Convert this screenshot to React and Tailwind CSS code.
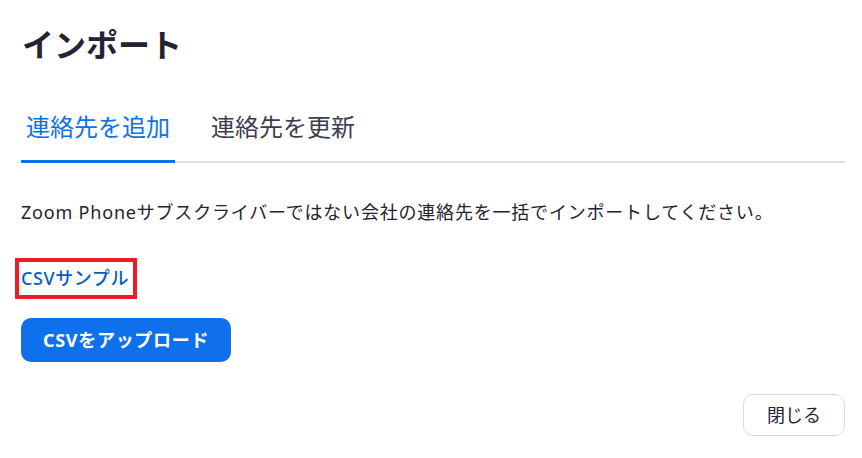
import React from 'react';

const font = { fontFamily: '"Noto Sans", "Noto Sans CJK JP", sans-serif' };

export default function App() {
  return (
    <div
      className="w-[862px] h-[458px] bg-white pl-[21px] pr-[17px] pt-[21px] text-[#232333]"
      style={font}
    >
      <h1 className="text-[32px] leading-[48px] font-bold text-[#232333] pl-[1px]">インポート</h1>

      {/* tabs */}
      <div className="mt-[40px] flex border-b-2 border-[#dfe1e6]">
        <button className="-mb-[2px] px-[5px] pb-[15px] text-[24px] leading-[36px] text-[#0e71eb] border-b-[3px] border-[#0e71eb]">
          連絡先を追加
        </button>
        <button className="-mb-[2px] ml-[32px] px-[4px] pb-[15px] text-[24px] leading-[36px] text-[#3d3e4d] border-b-[3px] border-transparent">
          連絡先を更新
        </button>
      </div>

      <p className="mt-[36px] text-[18px] leading-[27px] tracking-[0.8px] text-[#232333]">
        Zoom Phoneサブスクライバーではない会社の連絡先を一括でインポートしてください。
      </p>

      <div className="mt-[32px] -ml-[6px] inline-block border-4 border-[#ed1c24] pl-[2px] pr-[4px] py-[3px]">
        <a className="text-[18px] leading-[27px] tracking-[0.6px] font-medium text-[#0b5cc1] cursor-pointer">CSVサンプル</a>
      </div>

      <div className="mt-[19px]">
        <button className="h-[44px] px-[22px] rounded-[10px] bg-[#0e71eb] text-white text-[18px] tracking-[0.7px] font-bold leading-[27px]">
          CSVをアップロード
        </button>
      </div>

      <div className="mt-[32px] flex justify-end">
        <button className="h-[42px] px-[23px] rounded-[10px] border border-[#dadbe0] bg-white text-[18px] leading-[27px] text-[#232333]">
          閉じる
        </button>
      </div>
    </div>
  );
}
